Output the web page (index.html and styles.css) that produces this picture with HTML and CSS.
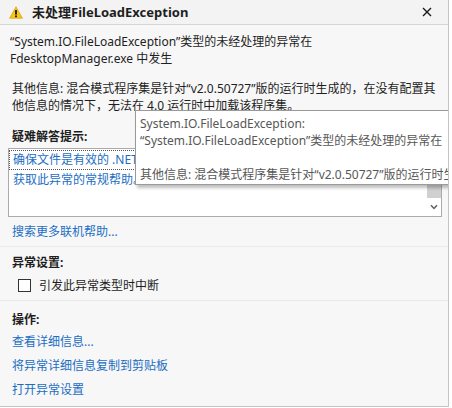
FILE: index.html
```html
<!DOCTYPE html>
<html>
<head>
<meta charset="utf-8">
<link rel="stylesheet" href="styles.css">
</head>
<body>
<div class="window">
  <div class="titlebar">
    <svg class="warn" width="14" height="13" viewBox="0 0 14 13">
      <path d="M7 0.8 L13.4 12.2 L0.6 12.2 Z" fill="#f5c518" stroke="#e0a800" stroke-width="0.8" stroke-linejoin="round"/>
      <rect x="6.1" y="4" width="1.8" height="4.6" fill="#111"/>
      <rect x="6.1" y="9.5" width="1.8" height="1.7" fill="#111"/>
    </svg>
    <span class="title">未处理FileLoadException</span>
    <svg class="close" width="10" height="10" viewBox="0 0 10 10">
      <path d="M1 1 L9 9 M9 1 L1 9" stroke="#1a1a1a" stroke-width="1.4" fill="none"/>
    </svg>
  </div>
  <div class="main">
    <p class="msg">“System.IO.FileLoadException”类型的未经处理的异常在<br>FdesktopManager.exe 中发生</p>
    <p class="info">其他信息: 混合模式程序集是针对“v2.0.50727”版的运行时生成的，在没有配置其他信息的情况下，无法在 4.0 运行时中加载该程序集。</p>
    <div class="head hint">疑难解答提示:</div>
    <div class="listbox">
      <div class="items">
        <div class="item focus">确保文件是有效的 .NET Framework 程序集。</div>
        <div class="item">获取此异常的常规帮助。</div>
      </div>
      <div class="scroll">
        <div class="thumb"></div>
        <svg class="chev" width="8" height="6" viewBox="0 0 8 6"><path d="M1 1.2 L4 4.4 L7 1.2" stroke="#606060" stroke-width="1.5" fill="none"/></svg>
      </div>
    </div>
    <a class="link search">搜索更多联机帮助...</a>
  </div>
  <div class="sep"></div>
  <div class="main">
    <div class="head settings">异常设置:</div>
    <label class="check"><span class="box"></span>引发此异常类型时中断</label>
  </div>
  <div class="sep"></div>
  <div class="main">
    <div class="head ops">操作:</div>
    <a class="link row">查看详细信息...</a>
    <a class="link row">将异常详细信息复制到剪贴板</a>
    <a class="link row">打开异常设置</a>
  </div>
  <div class="tooltip">
    <div>System.IO.FileLoadException:</div>
    <div>“System.IO.FileLoadException”类型的未经处理的异常在</div>
    <div>&nbsp;</div>
    <div>其他信息: 混合模式程序集是针对“v2.0.50727”版的运行时生成的，在没有配置其他信息的情况下</div>
  </div>
</div>
</body>
</html>
```

FILE: styles.css
```css
html, body {
  margin: 0;
  padding: 0;
  background: #ffffff;
  overflow: hidden;
  width: 452px;
  height: 408px;
}
body {
  font-family: "Noto Sans", "Noto Sans CJK SC", sans-serif;
  font-size: 12px;
  line-height: 17px;
  color: #1e1e1e;
}
.window {
  position: relative;
  width: 449px;
  height: 407px;
  box-sizing: border-box;
  background: #f7f7f7;
  border-right: 1px solid #c4c4c4;
  border-bottom: 1px solid #c4c4c4;
  overflow: hidden;
}
.titlebar {
  height: 24px;
  border-bottom: 1px solid #d6d6d6;
  border-top: 1px solid #e2e2e2;
  box-sizing: content-box;
  background: #f3f3f3;
  display: flex;
  align-items: center;
  padding-left: 9px;
  margin-top: -1px;
}
.warn { flex: none; }
.title {
  margin-left: 9px;
  font-weight: bold;
  font-size: 13px;
  flex: 1;
}
.close { margin-right: 16px; }
.main {
  padding: 0 12px;
  display: flex;
  flex-direction: column;
  align-items: flex-start;
}
.main:first-of-type { }
p { margin: 0; }
.msg { margin-top: 8px; margin-left: -2px; }
.info { margin-top: 13px; }
.head { font-weight: bold; }
.hint { margin-top: 14px; }
.listbox {
  margin-top: 3px;
  margin-left: -4px;
  width: 434px;
  height: 69px;
  box-sizing: border-box;
  border: 1px solid #ababab;
  background: #fff;
  display: flex;
}
.items {
  flex: 1;
  padding-top: 1px;
  overflow: hidden;
}
.item {
  height: 20px;
  line-height: 19px;
  padding-left: 4px;
  color: #1b6ec2;
  white-space: nowrap;
  box-sizing: border-box;
}
.item.focus { outline: 1px dotted #555; outline-offset: -1px; }
.scroll {
  width: 15px;
  position: relative;
  display: flex;
  flex-direction: column;
  align-items: center;
}
.thumb {
  width: 14px;
  height: 48px;
  background: #d0d0d0;
  margin-top: 1px;
}
.chev { margin-top: 6px; }
.link { color: #1b6ec2; cursor: pointer; }
.search { margin-top: 6px; }
.sep {
  height: 1px;
  background: #e9e9e9;
  margin: 6px 0 0;
}
.settings { margin-top: 7px; }
.check {
  display: flex;
  align-items: center;
  margin-top: 6px;
  margin-left: 6px;
}
.box {
  width: 11px;
  height: 11px;
  border: 1px solid #333;
  background: #fff;
  margin-right: 8px;
}
.ops { margin-top: 10px; }
.row { line-height: 24px; }
.row:first-of-type { margin-top: 2px; }
.tooltip {
  position: absolute;
  left: 135px;
  top: 110px;
  width: 340px;
  padding: 4px 4px 1px 4px;
  background: #ffffff;
  border: 1px solid #9a9a9a;
  color: #575757;
  white-space: nowrap;
  box-shadow: 2px 3px 3px rgba(0,0,0,0.25);
}
```
